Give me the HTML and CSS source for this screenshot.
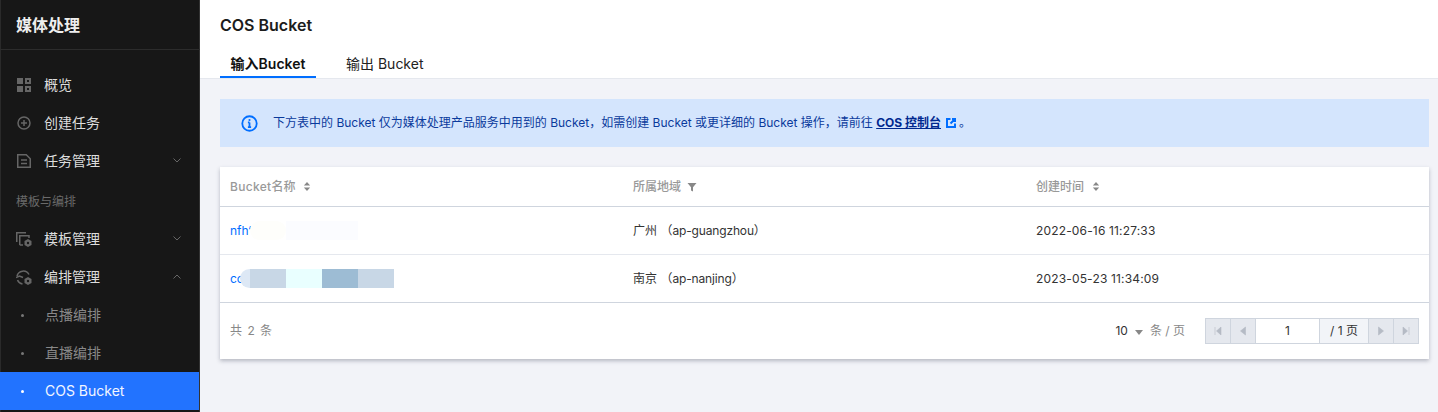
FILE: index.html
```html
<!DOCTYPE html>
<html lang="zh">
<head>
<meta charset="utf-8">
<title>COS Bucket</title>
<link rel="stylesheet" href="styles.css">
</head>
<body>
<div class="app">
  <aside class="side">
    <div class="brand">媒体处理</div>
    <nav class="nav">
      <div class="item"><svg class="ico" viewBox="0 0 14 14"><path d="M0 0h6v6H0zM0 8h6v6H0zM8 0h6v6H8zM10 2v2h2V2zM8 8h6v6H8zM10 10v2h2v-2zM2 10v2h0z" fill-rule="evenodd"/></svg><span>概览</span></div>
      <div class="item"><svg class="ico" viewBox="0 0 14 14"><circle class="ln" cx="7" cy="7" r="6"/><path class="ln" d="M4 7h6M7 4v6"/></svg><span>创建任务</span></div>
      <div class="item"><svg class="ico" viewBox="0 0 14 14"><path class="ln" d="M.75.75h8.500l4 4v8.500H.75z"/><path class="ln" d="M4 6h6M4 9.500h6"/></svg><span>任务管理</span><svg class="chev" viewBox="0 0 8 5"><path d="M.5.5L4 4 7.500.5"/></svg></div>
      <div class="group">模板与编排</div>
      <div class="item"><svg class="ico wide" viewBox="0 0 16 15"><path class="ln" d="M.75 10V.75H10M3.750 13V3.750H13V6M3.750 13H7"/><path d="M12 7l3.500 2v4L12 15l-3.500-2V9z"/><circle class="hole" cx="12" cy="11" r="1.200"/></svg><span>模板管理</span><svg class="chev" viewBox="0 0 8 5"><path d="M.5.5L4 4 7.500.5"/></svg></div>
      <div class="item"><svg class="ico wide" viewBox="0 0 16 15"><path class="ln" d="M1 6A6.500 6.500 0 0 1 13 4.500M0 7.500L3.500 6 7 7.500M1.500 10A6.500 6.500 0 0 0 6.500 14"/><path d="M12 7l3.500 2v4L12 15l-3.500-2V9z"/><circle class="hole" cx="12" cy="11" r="1.200"/></svg><span>编排管理</span><svg class="chev" viewBox="0 0 8 5"><path d="M.5 4.500L4 1l3.500 3.500"/></svg></div>
      <div class="item sub"><i class="dot"></i><span>点播编排</span></div>
      <div class="item sub"><i class="dot"></i><span>直播编排</span></div>
      <div class="item sub on"><i class="dot"></i><span>COS Bucket</span></div>
    </nav>
  </aside>
  <main class="main">
    <header class="head">
      <h1 class="title">COS Bucket</h1>
      <div class="tabs">
        <div class="tab active">输入Bucket</div>
        <div class="tab">输出 Bucket</div>
      </div>
    </header>
    <section class="body">
      <div class="alert">
        <svg class="info" viewBox="0 0 16 16"><circle cx="8" cy="8" r="6.800"/><path d="M8 7v4.500M6.500 7H8M6.500 11.500h3"/><circle class="pt" cx="8" cy="4.700" r="1"/></svg>
        <p>下方表中的 Bucket 仅为媒体处理产品服务中用到的 Bucket，如需创建 Bucket 或更详细的 Bucket 操作，请前往 <a class="cos">COS 控制台</a><svg class="ext" viewBox="0 0 10 10"><path d="M9 5.500V9H1V1h3.500M6 1h3v3M9 1L4.500 5.500"/></svg>。</p>
      </div>
      <div class="card">
        <div class="row thead">
          <div class="cell"><span class="bk">Bucket</span>名称<svg class="sort" viewBox="0.5 0 7 10"><path d="M4 0l3.500 4h-7zM4 10L.5 6h7z"/></svg></div>
          <div class="cell">所属地域<svg class="filter" viewBox="0 0 10 10"><path d="M.5 1h9L6 5.200V9.500L4 8.500V5.200z"/></svg></div>
          <div class="cell">创建时间<svg class="sort" viewBox="0.5 0 7 10"><path d="M4 0l3.500 4h-7zM4 10L.5 6h7z"/></svg></div>
        </div>
        <div class="row tr first">
          <div class="cell name"><a class="link">nfh‘</a><i class="blur a1"></i><i class="blur a2"></i></div>
          <div class="cell">广州 （<span class="code">ap-guangzhou</span>）</div>
          <div class="cell date">2022-06-16 11:27:33</div>
        </div>
        <div class="row tr last">
          <div class="cell name"><a class="link">cc</a><i class="blur b0"></i><i class="blur b1"></i><i class="blur b2"></i><i class="blur b3"></i><i class="blur b1"></i></div>
          <div class="cell">南京 （<span class="code">ap-nanjing</span>）</div>
          <div class="cell date">2023-05-23 11:34:09</div>
        </div>
        <div class="foot">
          <div class="total">共 2 条</div>
          <div class="pager">
            <span class="size">10</span><i class="caret"></i><span class="unit">条 / 页</span>
            <div class="pages">
              <button class="pbtn"><svg viewBox="0 0 8 10"><path d="M1 1v8M7 1v8L2.500 5z"/></svg></button>
              <button class="pbtn"><svg viewBox="0 0 8 10"><path d="M6.500 1v8L1.500 5z"/></svg></button>
              <div class="pinput">1</div>
              <div class="ptotal">/ 1 页</div>
              <button class="pbtn"><svg viewBox="0 0 8 10"><path d="M1.500 1v8l5-4z"/></svg></button>
              <button class="pbtn"><svg viewBox="0 0 8 10"><path d="M7 1v8M1 1v8l4.500-4z"/></svg></button>
            </div>
          </div>
        </div>
      </div>
    </section>
  </main>
</div>
</body>
</html>
```
FILE: styles.css
```css
* { box-sizing: border-box; }
html, body { margin: 0; height: 412px; overflow: hidden; }
body { font: 12px/20px Inter, "Noto Sans CJK SC", sans-serif; color: #222; background: #f2f3f8; }
.app { display: flex; height: 412px; }

.side { width: 200px; flex: none; background: #171717; box-shadow: inset 1px 0 #2a2a2a, inset -1px 0 #333; }
.brand { height: 50px; padding-left: 16px; font-size: 16px; font-weight: 700; line-height: 50px; color: #eee; border-bottom: 1px solid #2c2c2c; }
.nav { padding-top: 16px; }
.item { height: 38px; display: flex; align-items: center; padding: 0 19px 0 17px; font-size: 14px; color: #ddd; }
.ico { width: 14px; height: 14px; margin-right: 13px; fill: #666; flex: none; }
.wide { width: 16px; height: 15px; margin-left: -1px; margin-right: 12px; }
.ln { fill: none; stroke: #666; stroke-width: 1.500; }
.hole { fill: #171717; }
.chev { width: 8px; height: 5px; margin-left: auto; margin-top: -2px; fill: none; stroke: #666; stroke-width: 1; }
.group { height: 40px; line-height: 43px; padding-left: 16px; font-size: 12px; color: #6a6a6a; }
.sub { color: #888; padding-left: 21px; }
.dot { width: 3px; height: 3px; border-radius: 50%; background: #777; margin-right: 21px; }
.on { background: #2273ff; color: #f2f6ff; margin-right: 1px; }
.on .dot { background: #fff; }

.main { flex: 1; min-width: 0; display: flex; flex-direction: column; }
.head { height: 79px; background: #fff; border-bottom: 1px solid #e5e8ee; padding: 14px 20px 0; }
.title { margin: 0; font-size: 16px; font-weight: 600; line-height: 22px; color: #1c1c1c; }
.tabs { display: flex; margin-top: 18px; gap: 20px; }
.tab { height: 24px; padding: 0 10px; width: 96px; font-size: 14px; line-height: 20px; color: #222; white-space: nowrap; text-align: center; }
.tab + .tab { width: auto; }
.active { font-weight: 600; color: #111; border-bottom: 2px solid #006eff; }

.body { padding: 20px 9px 0 20px; }
.alert { height: 48px; background: #d4e5fd; display: flex; align-items: center; padding-left: 21px; color: #0a3a9c; }
.alert p { margin: 0 0 0 15px; }
.info { width: 17px; height: 17px; fill: none; stroke: #006eff; stroke-width: 1.700; }
.info .pt { fill: #006eff; stroke: none; }
.cos { font-weight: 700; color: #00288f; text-decoration: underline; }
.ext { width: 10px; height: 10px; margin: 0 3px 0 5px; fill: none; stroke: #006eff; stroke-width: 2; vertical-align: -1px; }

.card { margin-top: 20px; background: #fff; box-shadow: 0 2px 4px rgba(54,58,80,.32); }
.row { display: grid; grid-template-columns: 403px 403px 1fr; }
.cell { padding-left: 10px; display: flex; align-items: center; white-space: pre; color: #333; }
.thead { height: 40px; border-bottom: 1px solid #cfd5de; }
.thead .cell { color: #999; font-weight: 500; }
.bk { letter-spacing: .3px; }
.sort { width: 8px; height: 9px; margin-left: 8px; fill: #888; }
.filter { width: 10px; height: 10px; margin-left: 6px; fill: #888; }
.tr { height: 48px; }
.first { border-bottom: 1px solid #e5e8ee; }
.last { border-bottom: 1px solid #cfd5de; }
.code { letter-spacing: -.15px; }
.date { letter-spacing: .16px; }
.link { color: #006eff; }
.blur { display: block; height: 19px; width: 36px; }
.a1 { margin-left: -1px; background: #fefefb; border-radius: 10px; width: 36px; }
.a2 { width: 72px; background: #fbfcff; }
.b0 { width: 10px; margin-left: -4px; background: #dde8f5; border-radius: 10px 0 0 10px; }
.b1 { background: #c8d7e6; }
.b2 { background: #e9ffff; }
.b3 { background: #9dbcd4; }

.foot { height: 56px; display: flex; align-items: center; justify-content: space-between; padding: 0 10px; }
.total { color: #888; word-spacing: 2px; }
.pager { display: flex; align-items: center; }
.size { color: #333; }
.caret { width: 0; height: 0; margin: 2px 7px 0 7px; border: 4px solid transparent; border-top: 5px solid #888; border-bottom: 0; }
.unit { color: #888; margin-right: 20px; }
.pages { display: flex; height: 26px; border: 1px solid #cfd5de; background: #f2f4f8; }
.pbtn { width: 25px; padding: 0; border: 0; border-right: 1px solid #cfd5de; background: #e5e8ee; display: flex; align-items: center; justify-content: center; }
.pbtn:last-child { width: 24px; border-right: 0; }
.pbtn svg { width: 8px; height: 10px; fill: #b5bbc5; stroke: #b5bbc5; stroke-width: .6; }
.pinput { width: 64px; background: #fff; border-right: 1px solid #cfd5de; text-align: center; line-height: 24px; color: #333; }
.ptotal { width: 49px; border-right: 1px solid #cfd5de; text-align: center; line-height: 24px; color: #333; }
```
